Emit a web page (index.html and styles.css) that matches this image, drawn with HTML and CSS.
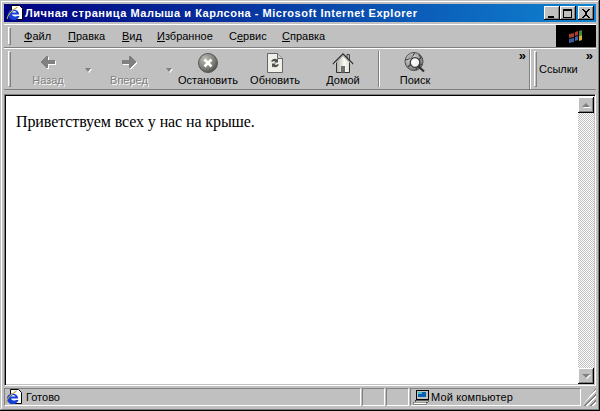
FILE: index.html
```html
<!DOCTYPE html>
<html lang="ru">
<head>
<meta charset="utf-8">
<title>Личная страница Малыша и Карлсона</title>
<link rel="stylesheet" href="styles.css">
</head>
<body>
<div class="window">
  <div class="titlebar">
    <svg class="ie-icon" width="18" height="16" viewBox="0 0 18 16"><path d="M5.500 .5h8l3 3v11h-11z" fill="#fff" stroke="#000"/><path d="M2 9a5.500 4.700 0 1 1 11 .5H6a3 2 0 0 0 5 1.500h2.500a5.500 4.700 0 0 1-11.500-2z" fill="#1440d8"/><path d="M6 7.500h4.500a2.300 2 0 0 0-4.500 0z" fill="#fff"/><path d="M1.500 14c-1-2 3-8 10-12" fill="none" stroke="#c8a840" stroke-width="1.100"/></svg>
    <span class="title-text">Личная страница Малыша и Карлсона - Microsoft Internet Explorer</span>
    <div class="caption-buttons">
      <span class="cap-btn"><svg width="10" height="9" viewBox="0 0 10 9"><rect x="1" y="7" width="6" height="2" fill="#000"/></svg></span>
      <span class="cap-btn"><svg width="10" height="9" viewBox="0 0 10 9"><path d="M0 0h9v9H0zM1 2v6h7V2z" fill="#000" fill-rule="evenodd"/></svg></span>
      <span class="cap-btn cap-close"><svg width="10" height="9" viewBox="0 0 10 9" shape-rendering="crispEdges"><path d="M1 0h2v1h1v1h2V1h1V0h2v1H8v1H7v1H6v3h1v1h1v1h1v1H7V8H6V7H4v1H3v1H1V8h1V7h1V6h1V3H3V2H2V1H1z" fill="#000"/></svg></span>
    </div>
  </div>

  <div class="menuband">
    <div class="menu-inner">
      <span class="grip"></span>
      <nav class="menu">
        <span class="mi mi-file"><u>Ф</u>айл</span>
        <span class="mi mi-edit"><u>П</u>равка</span>
        <span class="mi mi-view"><u>В</u>ид</span>
        <span class="mi mi-fav"><u>И</u>збранное</span>
        <span class="mi mi-tools">С<u>е</u>рвис</span>
        <span class="mi"><u>С</u>правка</span>
      </nav>
    </div>
    <div class="logo">
      <svg width="16" height="14" viewBox="0 0 16 14"><defs><filter id="soft" x="-20%" y="-20%" width="140%" height="140%"><feGaussianBlur stdDeviation=".7"/></filter></defs><g filter="url(#soft)"><path d="M1 5l5-1v4l-5 1z" fill="#a04030"/><path d="M1 10l5-1v4l-5 1z" fill="#3a5a9a"/><path d="M7 3l3-1v4l-3 1z" fill="#c03828"/><path d="M11 2l3-1v5l-3 1z" fill="#3c8a3c"/><path d="M7 8l3-1v4l-3 1z" fill="#3c64c0"/><path d="M11 7l3-1v5l-3 1z" fill="#d8b030"/></g></svg>
    </div>
  </div>

  <div class="toolband">
    <div class="tools">
      <span class="grip grip-tall"></span>
      <div class="tbtn disabled">
        <svg width="18" height="16" viewBox="0 0 18 16" shape-rendering="crispEdges"><path d="M1 8h1V7h1V6h1V5h1V4h1V3h1V2h2v4h7v4H9v4H7v-1H6v-1H5v-1H4v-1H3V9H2V8z" fill="#fff" transform="translate(1 1)"/><path d="M1 8h1V7h1V6h1V5h1V4h1V3h1V2h2v4h7v4H9v4H7v-1H6v-1H5v-1H4v-1H3V9H2V8z" fill="#808080"/></svg>
        <span class="tlabel">Назад</span>
      </div>
      <span class="drop"></span>
      <div class="tbtn disabled">
        <svg width="18" height="16" viewBox="0 0 18 16" shape-rendering="crispEdges"><path d="M17 8h-1V7h-1V6h-1V5h-1V4h-1V3h-1V2H9v4H2v4h7v4h2v-1h1v-1h1v-1h1v-1h1V9h1V8z" fill="#fff" transform="translate(1 1)"/><path d="M17 8h-1V7h-1V6h-1V5h-1V4h-1V3h-1V2H9v4H2v4h7v4h2v-1h1v-1h1v-1h1v-1h1V9h1V8z" fill="#808080"/></svg>
        <span class="tlabel">Вперед</span>
      </div>
      <span class="drop"></span>
      <div class="tbtn">
        <svg width="22" height="22" viewBox="0 0 22 22"><defs><radialGradient id="stop" cx=".35" cy=".3" r=".85"><stop offset="0" stop-color="#c0c0b8"/><stop offset=".6" stop-color="#7a7a72"/><stop offset="1" stop-color="#3c3c38"/></radialGradient></defs><circle cx="11" cy="11" r="9.500" fill="url(#stop)" stroke="#555"/><path d="M7.500 7.500l7 7M14.500 7.500l-7 7" stroke="#fff" stroke-width="2.600"/></svg>
        <span class="tlabel">Остановить</span>
      </div>
      <div class="tbtn">
        <svg width="22" height="22" viewBox="0 0 22 22"><path d="M3.500 1.500h10l5 5v14h-15z" fill="#f0f0e8" stroke="#666"/><path d="M13.500 1.500v5h5" fill="#d0d0d0" stroke="#666"/><path d="M7 9.500a4 4 0 0 1 6-2l1-1v4h-4l1.200-1.200a2 2 0 0 0-2.500.5z" fill="#505050"/><path d="M15 12.500a4 4 0 0 1-6 2l-1 1v-4h4l-1.200 1.200a2 2 0 0 0 2.500-.5z" fill="#505050"/></svg>
        <span class="tlabel">Обновить</span>
      </div>
      <div class="tbtn">
        <svg width="22" height="22" viewBox="0 0 22 22"><defs><linearGradient id="wall" x1="0" y1="0" x2="1" y2="0"><stop offset="0" stop-color="#b0b0a8"/><stop offset=".6" stop-color="#fbfbf6"/><stop offset="1" stop-color="#e0e0d8"/></linearGradient></defs><path d="M15 2.500h2.500v6h-2.500z" fill="#b8b8b8" stroke="#444"/><path d="M4.500 10v10.500h13V10L11 3.500z" fill="url(#wall)" stroke="#333"/><path d="M1 12l10-10 10 10" fill="none" stroke="#333" stroke-width="1.500"/><path d="M2.500 12l8.500-8.500 8.500 8.500" fill="none" stroke="#fff" stroke-width=".8"/><rect x="9" y="14" width="4" height="6.500" fill="#707070"/></svg>
        <span class="tlabel">Домой</span>
      </div>
      <span class="tsep"></span>
      <div class="tbtn">
        <svg width="22" height="22" viewBox="0 0 22 22"><defs><radialGradient id="globe" cx=".35" cy=".3" r=".9"><stop offset="0" stop-color="#e8e8e8"/><stop offset="1" stop-color="#585858"/></radialGradient></defs><circle cx="10" cy="9.500" r="9" fill="url(#globe)" stroke="#505050"/><path d="M1.500 8l6-2 3-5M4 15l3-3M15 2l2 4-3 2M12 18l1-3 5-3" fill="none" stroke="#404040" stroke-width="1.100"/><path d="M3 5l4-3 2 2-3 3z" fill="#a8a8a8"/><circle cx="11" cy="10.500" r="4.800" fill="#f4f4f4" stroke="#383838" stroke-width="1.300"/><circle cx="10" cy="9.500" r="1.800" fill="#fff"/><path d="M14.500 14.500l5.500 5" stroke="#303030" stroke-width="2.200"/></svg>
        <span class="tlabel">Поиск</span>
      </div>
      <span class="chev chev-tools">»</span>
    </div>
    <div class="links">
      <span class="grip grip-tall"></span>
      <span class="links-text">Ссылки</span>
      <span class="chev">»</span>
    </div>
  </div>

  <div class="viewport">
    <main class="page"><p class="greeting">Приветствуем всех у нас на крыше.</p></main>
    <div class="scrollbar">
      <span class="sb-btn"><i class="arrow-up"></i></span>
      <span class="sb-track"></span>
      <span class="sb-btn"><i class="arrow-down"></i></span>
    </div>
  </div>

  <div class="statusbar">
    <div class="pane pane-main">
      <svg width="18" height="16" viewBox="0 0 18 16"><path d="M5.500 .5h8l3 3v11h-11z" fill="#fff" stroke="#000"/><path d="M2 9a5.500 4.700 0 1 1 11 .5H6a3 2 0 0 0 5 1.500h2.500a5.500 4.700 0 0 1-11.500-2z" fill="#1440d8"/><path d="M6 7.500h4.500a2.300 2 0 0 0-4.500 0z" fill="#fff"/><path d="M1.500 14c-1-2 3-8 10-12" fill="none" stroke="#c8a840" stroke-width="1.100"/></svg>
      <span>Готово</span>
    </div>
    <div class="pane pane-small"></div>
    <div class="pane pane-small"></div>
    <div class="pane pane-zone">
      <svg width="17" height="16" viewBox="0 0 17 16" shape-rendering="crispEdges"><path d="M3 1h12v9H3z" fill="#c0c0c0" stroke="#000"/><rect x="5" y="3" width="8" height="5" fill="#0a60b0"/><rect x="5" y="3" width="4" height="2" fill="#40c0c0"/><path d="M2 11h13v2H2z" fill="#c0c0c0" stroke="#000" stroke-width=".5"/><path d="M0 13h13l1 2H0z" fill="#fffff0" stroke="#404040" stroke-width=".5"/></svg>
      <span class="zone-text">Мой компьютер</span>
    </div>
    <div class="resize"></div>
  </div>
</div>
</body>
</html>
```
FILE: styles.css
```css
* { box-sizing: border-box; }
html, body { margin: 0; padding: 0; overflow: hidden; }
body { width: 600px; height: 411px; background: #c0c0c0; }

.window {
  width: 600px;
  height: 411px;
  padding: 4px 4px 5px;
  display: flex;
  flex-direction: column;
  background: #c0c0c0;
  font: 11px/13px "Liberation Sans", Arial, sans-serif;
  color: #000;
  box-shadow: inset -1px -1px 0 #000, inset 1px 1px 0 #c0c0c0, inset -2px -2px 0 #808080, inset 2px 2px 0 #fff;
}

.titlebar {
  height: 18px;
  flex: none;
  display: flex;
  align-items: center;
  padding: 0 2px 0 2px;
  background: linear-gradient(90deg, #000080, #1084d0);
}
.ie-icon { flex: none; margin-right: 1px; }
.title-text {
  font-weight: bold;
  font-size: 11px;
  letter-spacing: .53px;
  color: #fff;
  white-space: nowrap;
}
.caption-buttons { margin-left: auto; display: flex; }
.cap-btn {
  width: 16px;
  height: 14px;
  display: flex;
  align-items: center;
  justify-content: center;
  background: #c0c0c0;
  box-shadow: inset -1px -1px 0 #000, inset 1px 1px 0 #fff, inset -2px -2px 0 #808080;
}
.cap-close { margin-left: 2px; }

.menuband {
  height: 24px;
  flex: none;
  margin-top: 2px;
  display: flex;
  border-top: 1px solid #fff;
  border-bottom: 1px solid #808080;
}
.menu-inner { flex: 1; display: flex; align-items: center; padding-left: 4px; }
.grip {
  width: 3px;
  height: 18px;
  flex: none;
  background: #c0c0c0;
  border: 1px solid;
  border-color: #fff #808080 #808080 #fff;
}
.grip-tall { height: 36px; }
.menu { display: flex; margin-left: 13px; }
.mi { white-space: nowrap; }
.mi u { text-underline-offset: 1px; }
.mi-file { width: 44px; }
.mi-edit { width: 54px; }
.mi-view { width: 35px; }
.mi-fav { width: 72px; }
.mi-tools { width: 53px; }
.logo {
  width: 40px;
  flex: none;
  background: #000;
  display: flex;
  align-items: center;
  justify-content: center;
}

.toolband {
  height: 42px;
  flex: none;
  display: flex;
  border-top: 1px solid #fff;
  border-bottom: 1px solid #808080;
}
.tools {
  width: 526px;
  flex: none;
  display: flex;
  align-items: center;
  padding-left: 4px;
  border-right: 1px solid #808080;
  position: relative;
}
.tbtn {
  width: 68px;
  height: 38px;
  flex: none;
  display: flex;
  flex-direction: column;
  align-items: center;
  justify-content: flex-end;
  padding-bottom: 1px;
}
.tools > .grip + .tbtn { width: 66px; margin-left: 4px; }
.drop + .tbtn { width: 66px; }
.tbtn svg { flex: none; margin-bottom: 0; }
.disabled svg { margin-bottom: 4px; }
.tlabel { white-space: nowrap; }
.disabled .tlabel { color: #808080; text-shadow: 1px 1px 0 #fff; }
.drop {
  width: 13px;
  flex: none;
  height: 4px;
  margin-top: 1px;
  position: relative;
}
.tools > .drop:nth-of-type(2) { width: 15px; }
.drop::after {
  content: "";
  position: absolute;
  left: 4px;
  top: 0;
  border: 3px solid transparent;
  border-top: 4px solid #808080;
  border-bottom: 0;
  filter: drop-shadow(1px 1px 0 #fff);
}
.tsep {
  width: 2px;
  height: 36px;
  flex: none;
  margin: 0 1px;
  border-left: 1px solid #808080;
  border-right: 1px solid #fff;
}
.chev {
  font: bold 13px/10px "Liberation Sans", Arial, sans-serif;
  position: absolute;
  top: 2px;
  right: 3px;
}
.links {
  flex: 1;
  display: flex;
  align-items: center;
  padding-left: 3px;
  position: relative;
  border-left: 1px solid #fff;
}
.links-text { margin-left: 2px; }

.viewport {
  height: 292px;
  flex: none;
  margin-top: 4px;
  display: flex;
  background: #fff;
  border: 1px solid;
  border-color: #808080 #fff #fff #808080;
  box-shadow: inset 1px 1px 0 #000, inset -1px -1px 0 #c0c0c0;
  padding: 2px 1px 1px 2px;
}
.page { flex: 1; padding: 16px 9px; }
.greeting {
  margin: 0;
  font: 16px/18px "Liberation Serif", "Times New Roman", serif;
  letter-spacing: -.1px;
  white-space: nowrap;
}
.scrollbar { width: 16px; flex: none; display: flex; flex-direction: column; }
.sb-btn {
  height: 16px;
  flex: none;
  display: flex;
  align-items: center;
  justify-content: center;
  background: #c0c0c0;
  box-shadow: inset -1px -1px 0 #000, inset 1px 1px 0 #fff, inset -2px -2px 0 #808080;
}
.sb-track {
  flex: 1;
  background: repeating-conic-gradient(#c0c0c0 0 25%, #fff 0 50%) 0 0 / 2px 2px;
}
.arrow-up, .arrow-down { display: block; border: 4px solid transparent; border-top: 0; border-bottom: 4px solid #808080; filter: drop-shadow(1px 1px 0 #fff); }
.arrow-down { border-bottom: 0; border-top: 4px solid #808080; }

.statusbar {
  height: 18px;
  flex: none;
  margin-top: 2px;
  display: flex;
  gap: 1px;
}
.pane {
  display: flex;
  align-items: center;
  gap: 3px;
  border: 1px solid;
  border-color: #808080 #fff #fff #808080;
  white-space: nowrap;
}
.pane-main { width: 357px; padding-left: 0; }
.pane-small { width: 23px; }
.pane-zone { flex: 1; padding-left: 2px; gap: 1px; }
.zone-text { letter-spacing: .15px; }
.resize {
  width: 14px;
  flex: none;
  background: repeating-linear-gradient(135deg, #c0c0c0 0 1.400px, #808080 1.400px 2.800px, #fff 2.800px 4.200px);
  clip-path: polygon(100% 0, 100% 100%, 0 100%);
}
```
